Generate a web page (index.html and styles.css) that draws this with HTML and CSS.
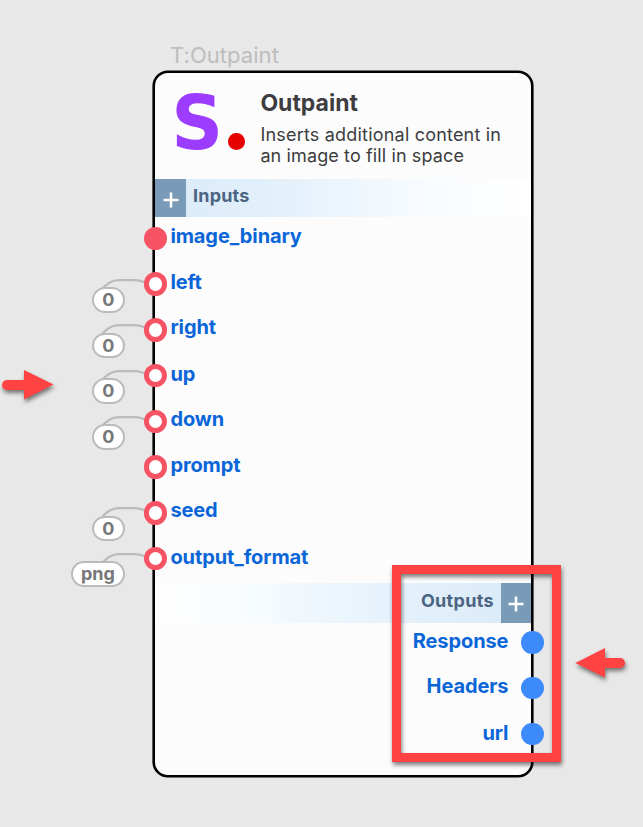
FILE: index.html
```
<!DOCTYPE html>
<html lang="en">
<head>
<meta charset="utf-8">
<title>Outpaint</title>
<link rel="stylesheet" href="styles.css">
</head>
<body>
<svg width="0" height="0" class="defs">
  <symbol id="wire" viewBox="0 0 50 14"><path d="M5 12C10 7 14 3.2 22 3.2H37C43 3.2 47 4.5 50 7" fill="none" stroke="#bbb" stroke-width="2.2"/></symbol>
  <symbol id="plus" viewBox="0 0 16 16"><path d="M8 .5v15M.5 8h15" stroke="#fff" stroke-width="2.5"/></symbol>
</svg>
<main class="canvas">
  <div class="node-title">T:Outpaint</div>
  <section class="node">
    <header class="head">
      <div class="logo"><span class="letter">S</span><span class="dot"></span></div>
      <div class="about">
        <h1>Outpaint</h1>
        <p>Inserts additional content in<br><span class="tight">an image to fill in space</span></p>
      </div>
    </header>
    <div class="band band-in"><span class="add"><svg><use href="#plus"/></svg></span><span class="band-label">Inputs</span></div>
    <ul class="inputs">
      <li><i class="port full"></i><b>image_binary</b></li>
      <li><svg class="wire"><use href="#wire"/></svg><span class="chip">0</span><i class="port"></i><b>left</b></li>
      <li><svg class="wire"><use href="#wire"/></svg><span class="chip">0</span><i class="port"></i><b class="high">right</b></li>
      <li><svg class="wire"><use href="#wire"/></svg><span class="chip">0</span><i class="port"></i><b>up</b></li>
      <li><svg class="wire"><use href="#wire"/></svg><span class="chip">0</span><i class="port"></i><b>down</b></li>
      <li><i class="port"></i><b>prompt</b></li>
      <li><svg class="wire"><use href="#wire"/></svg><span class="chip">0</span><i class="port"></i><b class="high">seed</b></li>
      <li><svg class="wire"><use href="#wire"/></svg><span class="chip">png</span><i class="port"></i><b>output_format</b></li>
    </ul>
    <div class="band band-out"><span class="band-label">Outputs</span><span class="add"><svg><use href="#plus"/></svg></span></div>
    <ul class="outputs">
      <li><b>Response</b><i class="port"></i></li>
      <li><b class="high">Headers</b><i class="port"></i></li>
      <li><b>url</b><i class="port"></i></li>
    </ul>
  </section>
  <div class="highlight"></div>
  <svg class="arrow arrow-left" viewBox="0 0 54 30"><path d="M7 10H24V0L53.5 14.5L24 29.5V20H7A5 5 0 0 1 7 10Z"/></svg>
  <svg class="arrow arrow-right" viewBox="0 0 50 30"><path d="M45 10H30V0L.3 15L30 29.5V20H45A5 5 0 0 0 45 10Z"/></svg>
</main>
</body>
</html>
```
FILE: styles.css
```
* { box-sizing: border-box; }
body { margin: 0; background: #e8e8e8; font-family: Inter, sans-serif; }
.defs { position: absolute; }
.canvas { position: relative; width: 643px; height: 827px; overflow: hidden; }
.node-title { position: absolute; left: 170px; top: 42px; font-size: 22px; line-height: 27px; letter-spacing: .05px; color: #bdbdbd; }
.node {
  position: absolute; left: 153px; top: 71px; width: 380px; height: 706px;
  border: 2px solid #000; border-radius: 15px; background: #fcfcfc;
  box-shadow: 0 0 0 .6px #000;
}
.head { display: flex; height: 106px; }
.logo { display: flex; width: 105.4px; padding-left: 15.5px; }
.letter { width: 57.5px; font: bold 75px/87px "DejaVu Sans", sans-serif; color: #9b3cff; margin-top: 7px; transform: scaleX(.96); transform-origin: 5px 0; }
.dot { width: 16.6px; height: 16.6px; margin-top: 60px; border-radius: 50%; background: #e60000; }
.about { color: #3d3d3f; white-space: nowrap; }
h1 { margin: 16px 0 0; font-size: 23px; line-height: 28px; font-weight: 700; }
p { margin: 7px 0 0; font-size: 18px; line-height: 21px; letter-spacing: .2px; }
.tight { letter-spacing: .12px; }
.band { display: flex; height: 38px; }
.band-in { background: linear-gradient(90deg, #d9eaf7, #e4f1fb 35%, #f7fbff 70%, #fff); }
.band-out { height: 39.5px; justify-content: flex-end; background: linear-gradient(270deg, #d9eaf7, #e4f1fb 35%, #f7fcff 75%, #fff); }
.add { width: 31px; background: #799bb7; display: flex; align-items: center; justify-content: center; padding-top: 3px; }
.add svg { width: 16px; height: 16px; }
.band-label { font-size: 18px; font-weight: 700; line-height: 34px; letter-spacing: .2px; color: #4b6482; padding: 0 7px; }
.band-out .band-label { line-height: 36px; letter-spacing: .3px; padding-right: 6.7px; }
.band-out .add { width: 30.5px; }
ul { list-style: none; margin: 0; padding: 0; }
.inputs { height: 366.5px; margin-top: -1.5px; margin-bottom: 1px; }
li { position: relative; display: flex; align-items: center; height: 45.75px; font-size: 20px; color: #0a66d8; }
b { font-weight: 700; line-height: 24px; margin-top: -4px; letter-spacing: -.1px; }
b.high { margin-top: -6px; }
.port { position: relative; flex: none; width: 23.4px; height: 23.4px; border: 5px solid #f65365; border-radius: 50%; background: #fff; }
.inputs .port { margin-left: -11px; margin-right: 3px; }
.inputs .full { background: #f65365; }
.wire { position: absolute; left: -58px; top: 15.4px; width: 50px; height: 14px; }
.chip {
  position: absolute; right: 406.2px; top: 25.6px; min-width: 32.8px; height: 25.8px;
  padding: 0 8px; border: 2px solid #bbb; border-radius: 13px; background: #fff;
  color: #777; font-size: 18px; font-weight: 700; line-height: 22px; text-align: center;
}
.outputs { margin-top: -3px; }
.outputs li { justify-content: flex-end; }
.outputs b { margin-top: -2px; }
.outputs b.high { margin-top: -4px; }
.outputs .port { width: 22.6px; height: 22.6px; border: 0; background: #3d8bfa; margin-left: 13px; margin-right: -13px; }
.highlight { position: absolute; left: 392px; top: 565px; width: 169px; height: 197px; border: 9px solid #ff4343; filter: drop-shadow(1px 3px 2px rgba(0,0,0,.5)); }
.arrow { position: absolute; overflow: visible; fill: #ff4343; filter: drop-shadow(1px 3px 2px rgba(0,0,0,.5)); }
.arrow-left { left: 0; top: 370px; width: 54px; height: 30px; }
.arrow-right { left: 575px; top: 648px; width: 50px; height: 30px; }
```
